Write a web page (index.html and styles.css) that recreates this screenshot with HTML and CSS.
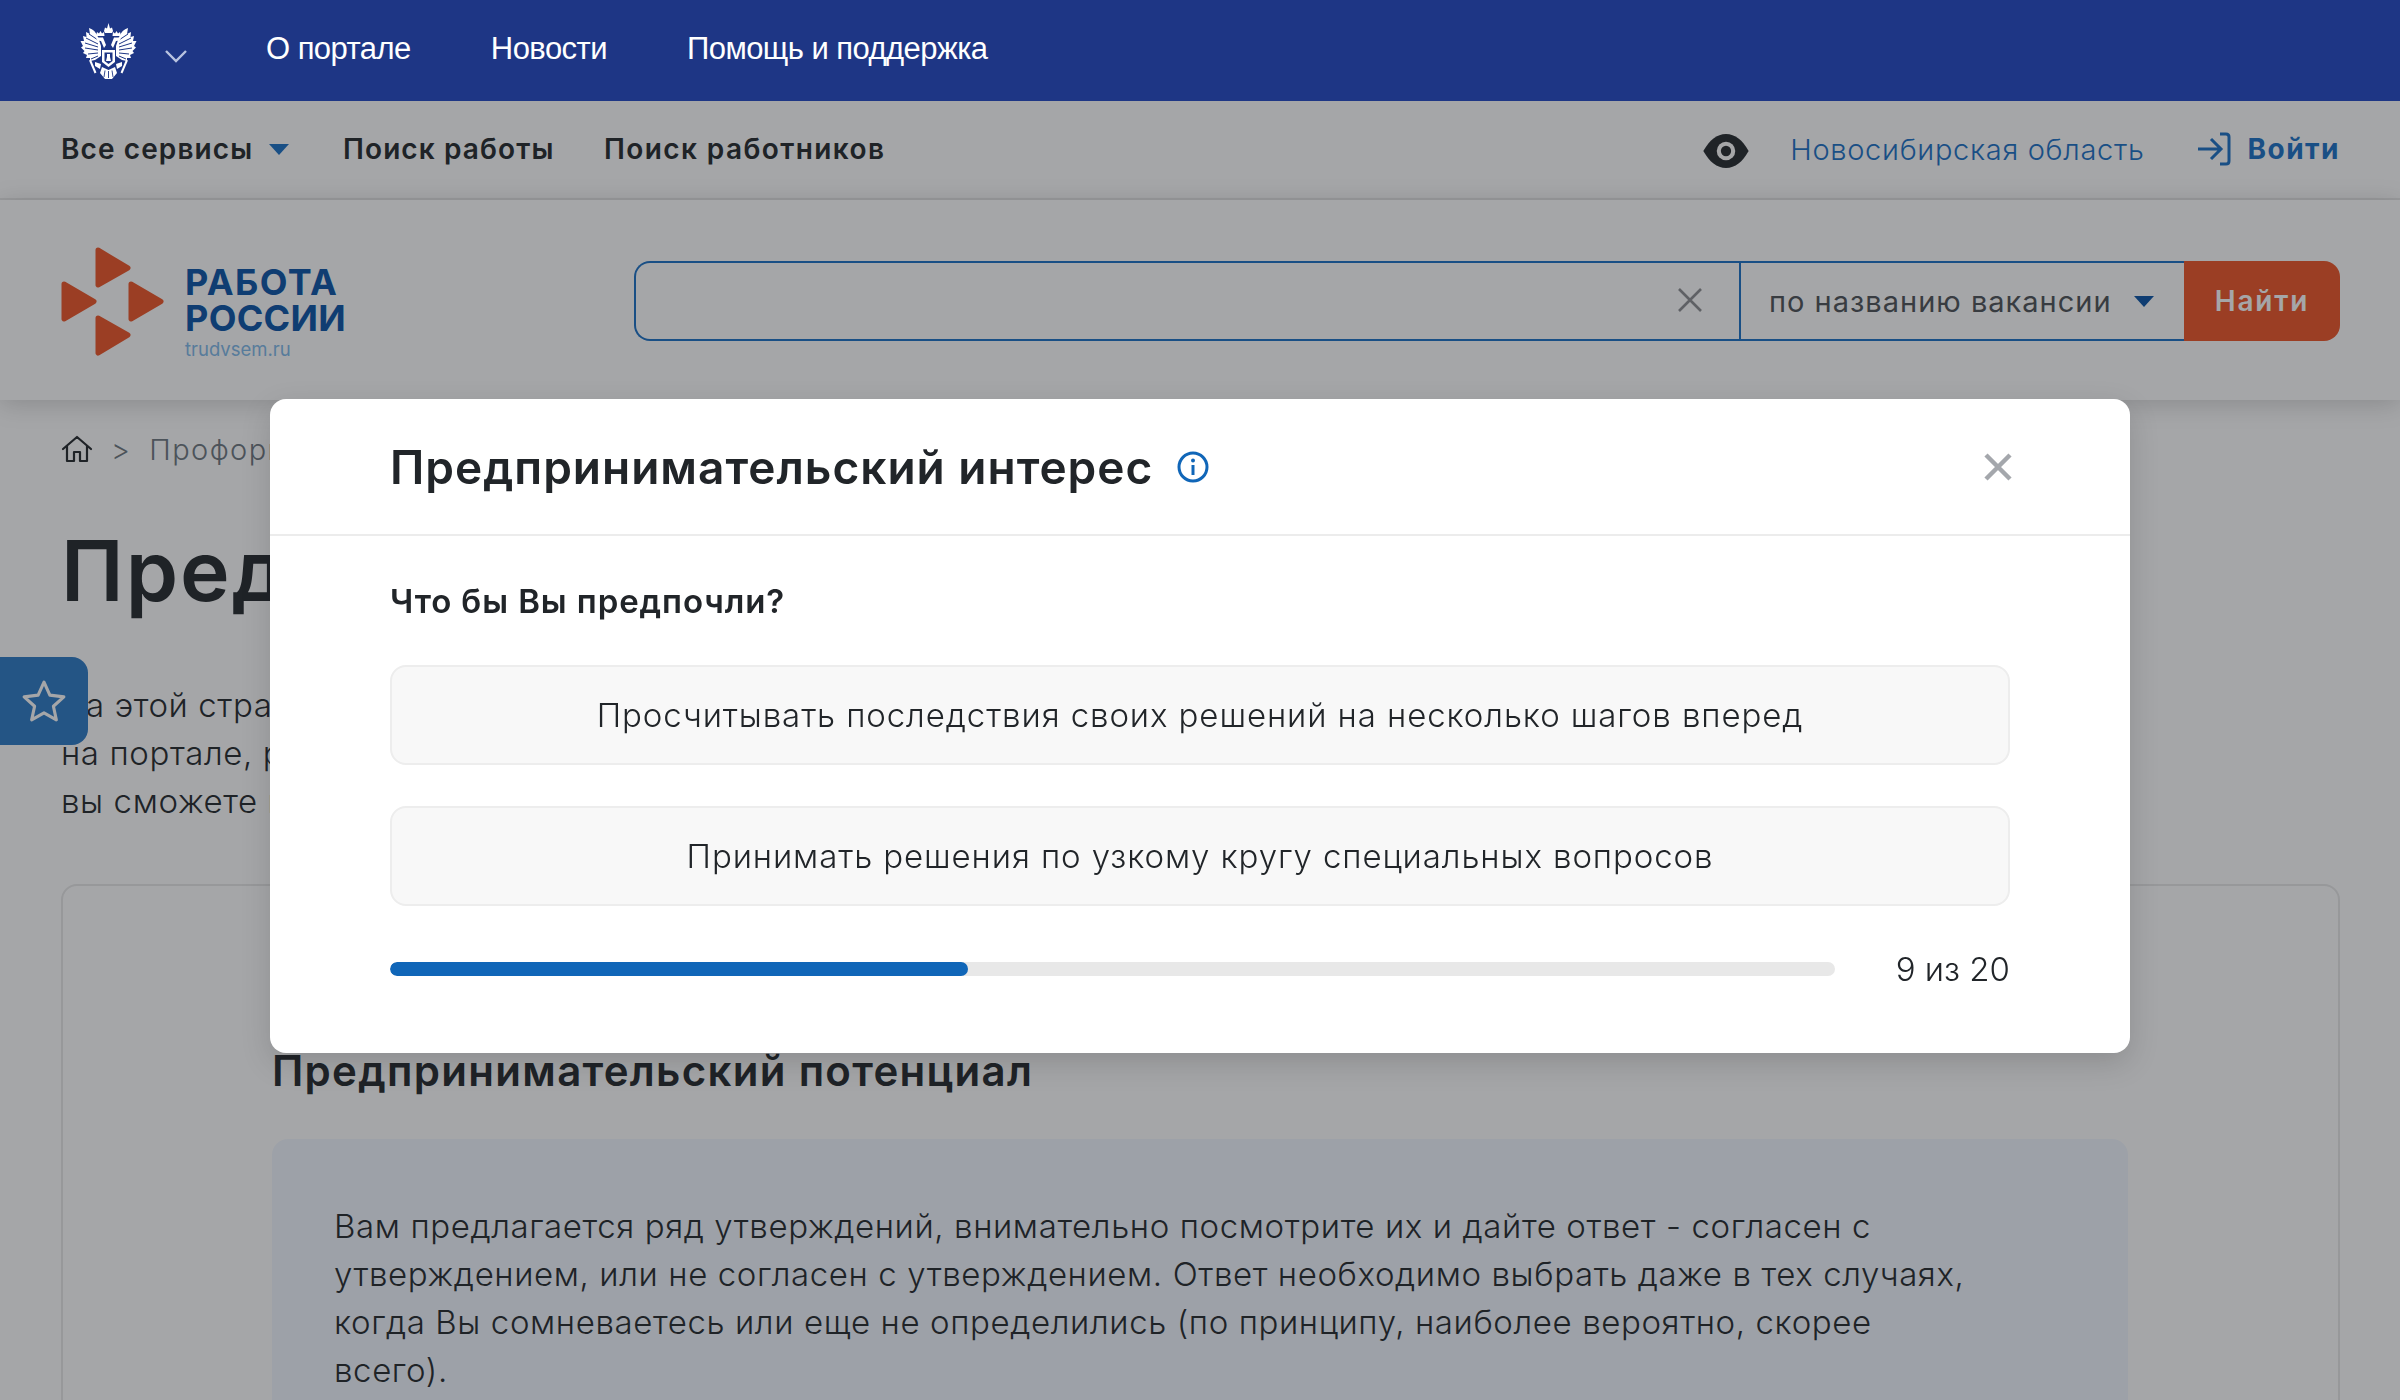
FILE: index.html
```html
<!DOCTYPE html>
<html lang="ru">
<head>
<meta charset="utf-8">
<title>Работа России</title>
<link rel="stylesheet" href="styles.css">
</head>
<body>
<div class="topbar">
  <svg class="emblem" viewBox="0 0 57 56" width="57" height="56">
    <defs>
      <g id="halfeagle">
        <path d="M21 23 L18 14 C16 9 13 6 9 5 L10 11 L6 9 L6.5 14 L3 13 L4 18 L0.5 18 L3 23 L1 24.5 L4.5 28 L3 30 L7 32 L6 35 L10 35 L10 38 L15 37 L21 33 Z" fill="#fff"/>
        <path d="M18 17 L9 11 M18 21 L6 15 M18 24 L5 20 M18 27 L5 25 M18 30 L8 31 M18 33 L11 36" stroke="#1e3685" stroke-width="1" fill="none"/>
        <path d="M16 13 L17 9 L19 10.5 L20.5 8 L22 10.5 L24 9 L24.5 13 Z" fill="#fff"/>
        <path d="M16 14.5 H23 L26 22 L24 25 L21 18 L17 17.5 Z" fill="#fff"/>
        <path d="M10 37 L15.5 50" stroke="#fff" stroke-width="2"/>
        <path d="M15 39 L21 41 L20 46 L15 43 Z" fill="#fff"/>
      </g>
    </defs>
    <use href="#halfeagle"/>
    <use href="#halfeagle" transform="matrix(-1 0 0 1 57 0)"/>
    <path d="M24 8 L25 4.5 L27 5.5 L28.5 0 L30 5.5 L32 4.5 L33 8 L32 10 H25 Z" fill="#fff"/>
    <path d="M22 27 H35 V39 L28.5 44 L22 39 Z" fill="#fff"/>
    <path d="M24.5 29.5 H32.5 V38 L28.5 41 L24.5 38 Z" fill="#1e3685"/>
    <path d="M27 31 H30 V34 L31 38 H26 L27 34 Z" fill="#fff"/>
    <path d="M22 44 L28.5 47 L35 44 L37 50 L32 56 H25 L20 50 Z" fill="#fff"/>
    <path d="M28.5 48 V55 M25 47.5 L24 54 M32 47.5 L33 54" stroke="#1e3685" stroke-width=".9"/>
  </svg>
  <svg class="chevron" viewBox="0 0 22 13" width="22" height="13"><path d="M1 1 L11 11 L21 1" fill="none" stroke="#b9c4e0" stroke-width="2.4"/></svg>
  <nav class="topnav">
    <a class="topnav-link">О портале</a>
    <a class="topnav-link">Новости</a>
    <a class="topnav-link">Помощь и поддержка</a>
  </nav>
</div>

<div class="subnav">
  <div class="subnav-left">
    <a class="subnav-link subnav-services">Все сервисы <span class="caret"></span></a>
    <a class="subnav-link subnav-work">Поиск работы</a>
    <a class="subnav-link subnav-workers">Поиск работников</a>
  </div>
  <div class="subnav-right">
    <svg class="eye" viewBox="0 0 44 33" width="46" height="34">
      <path d="M0 16.5 C6 6 13 0 22 0 C31 0 38 6 44 16.5 C38 27 31 33 22 33 C13 33 6 27 0 16.5 Z" fill="#212529"/>
      <circle cx="22" cy="16.5" r="9" fill="#fff"/>
      <circle cx="22" cy="16.5" r="5" fill="#212529"/>
    </svg>
    <a class="region">Новосибирская область</a>
    <a class="login">
      <svg viewBox="0 0 34 34" width="34" height="34">
        <path d="M23 2 H29 Q32 2 32 5 V29 Q32 32 29 32 H23" fill="none" stroke="#176ec5" stroke-width="3"/>
        <path d="M1 17 H23 M14 7 L24 17 L14 27" fill="none" stroke="#176ec5" stroke-width="3"/>
      </svg>
      <span class="login-text">Войти</span>
    </a>
  </div>
</div>

<header class="brandbar">
  <div class="logo">
    <svg class="logo-mark" viewBox="0 0 103 109" width="103" height="109">
      <g fill="#ee5324" stroke="#ee5324" stroke-width="5" stroke-linejoin="round">
        <path d="M37 3 L67 21 L37 38 Z"/>
        <path d="M3 37 L33 54.500 L3 72 Z"/>
        <path d="M70 37 L100 54.500 L70 72 Z"/>
        <path d="M37 71 L67 88 L37 106 Z"/>
      </g>
    </svg>
    <div class="logo-text">
      <div class="logo-line">РАБОТА</div>
      <div class="logo-line logo-line-second">РОССИИ</div>
      <div class="logo-url">trudvsem.ru</div>
    </div>
  </div>
  <form class="search">
    <div class="search-input">
      <svg viewBox="0 0 26 26" width="26" height="26"><path d="M2 2 L24 24 M24 2 L2 24" stroke="#8a8c8f" stroke-width="2.6" fill="none"/></svg>
    </div>
    <div class="search-select">
      <span>по названию вакансии</span>
      <span class="caret caret-select"></span>
    </div>
    <div class="search-button">Найти</div>
  </form>
</header>

<main class="page">
  <div class="crumbs">
    <svg viewBox="0 0 32 28" width="32" height="28"><path d="M2 14 L16 2 L30 14 M6 11 V26 H13 V17 H19 V26 H26 V11" fill="none" stroke="#212529" stroke-width="2.2" stroke-linejoin="round" stroke-linecap="round"/></svg>
    <span class="crumb-sep">&gt;</span>
    <span class="crumb">Профориентация</span>
  </div>
  <h1 class="page-title">Предпринимательский потенциал</h1>
  <p class="intro">На этой странице вы можете пройти тест<br>на портале, результаты которого помогут,<br>вы сможете получить рекомендации</p>
  <section class="card">
    <h2 class="card-title">Предпринимательский потенциал</h2>
    <div class="note">Вам предлагается ряд утверждений, внимательно посмотрите их и дайте ответ - согласен с утверждением, или не согласен с утверждением. Ответ необходимо выбрать даже в тех случаях, когда Вы сомневаетесь или еще не определились (по принципу, наиболее вероятно, скорее всего).</div>
  </section>
</main>

<a class="favtab">
  <svg viewBox="0 0 44 42" width="46" height="44"><path d="M22 3 L27.6 15.4 L41 17 L31 26 L33.8 39 L22 32.4 L10.2 39 L13 26 L3 17 L16.4 15.4 Z" fill="none" stroke="#fff" stroke-width="3" stroke-linejoin="round"/></svg>
</a>

<div class="backdrop">
  <div class="modal">
    <div class="modal-head">
      <h3 class="modal-title">Предпринимательский интерес</h3>
      <svg class="info" viewBox="0 0 32 32" width="32" height="32">
        <circle cx="16" cy="16" r="14" fill="none" stroke="#1066b8" stroke-width="3"/>
        <path d="M16 14 V24" stroke="#1066b8" stroke-width="3"/>
        <circle cx="16" cy="9.5" r="2" fill="#1066b8"/>
      </svg>
      <svg class="close" viewBox="0 0 28 28" width="28" height="28"><path d="M2 2 L26 26 M26 2 L2 26" stroke="#a4a7ac" stroke-width="4.5" fill="none"/></svg>
    </div>
    <div class="modal-body">
      <div class="question">Что бы Вы предпочли?</div>
      <div class="options">
        <button class="option" type="button">Просчитывать последствия своих решений на несколько шагов вперед</button>
        <button class="option" type="button">Принимать решения по узкому кругу специальных вопросов</button>
      </div>
      <div class="progress-row">
        <div class="progress"><div class="progress-fill" style="width:40%"></div></div>
        <div class="progress-label">9 из 20</div>
      </div>
    </div>
  </div>
</div>
</body>
</html>
```

FILE: styles.css
```css
* { box-sizing: border-box; }
html, body { margin: 0; height: 1400px; overflow: hidden; }
body {
  background: #fff;
  color: #212529;
  font-family: Inter, "Noto Sans", sans-serif;
  font-size: 33px;
  font-weight: 300;
  letter-spacing: .6px;
}
a { color: inherit; text-decoration: none; }

.topbar {
  position: relative;
  z-index: 20;
  height: 101px;
  background: #1e3685;
  display: flex;
  align-items: center;
  padding-left: 80px;
}
.emblem { display: block; }
.chevron { margin: 12px 0 0 28px; }
.topnav {
  display: flex;
  gap: 80px;
  margin: 0 0 3px 79px;
  font-family: "Liberation Sans", Arial, sans-serif;
  font-size: 31px;
  font-weight: 400;
  letter-spacing: -.55px;
  color: #fff;
}

.subnav {
  height: 99px;
  display: flex;
  justify-content: space-between;
  align-items: center;
  padding: 0 60px 1px 61px;
  border-bottom: 2px solid #ebebeb;
}
.subnav-left { display: flex; align-items: center; }
.subnav-link { font-size: 28px; font-weight: 600; letter-spacing: 1.1px; }
.subnav-services { display: flex; align-items: center; gap: 16px; width: 282px; }
.subnav-work { width: 261px; }
.subnav-workers { letter-spacing: 1.4px; }
.caret {
  display: inline-block;
  width: 0;
  height: 0;
  border-left: 10px solid transparent;
  border-right: 10px solid transparent;
  border-top: 11px solid #176ec5;
}
.subnav-right { display: flex; align-items: center; }
.eye { margin: 3px 41px 0 0; }
.region { color: #176ec5; font-size: 29px; letter-spacing: .7px; margin: 1px 53px 0 0; }
.login { display: flex; align-items: center; gap: 16px; color: #176ec5; font-weight: 700; font-size: 28px; letter-spacing: 1.5px; }

.brandbar {
  position: relative;
  height: 200px;
  display: flex;
  align-items: center;
  padding: 2px 60px 0 61px;
  box-shadow: 0 4px 24px rgba(0, 0, 0, .18);
}
.logo { display: flex; align-items: center; width: 573px; }
.logo-mark { display: block; }
.logo-text { margin: 24px 0 0 21px; }
.logo-line { font-weight: 700; font-size: 36px; line-height: 36px; letter-spacing: 1.4px; color: #0550a5; }
.logo-line-second { letter-spacing: .3px; }
.logo-url { font-size: 18.500px; line-height: 26px; font-weight: 400; letter-spacing: 0; color: #7db8ea; }
.search {
  flex: 1;
  height: 80px;
  display: flex;
}
.search-input {
  flex: 1;
  border: 2px solid #176ec5;
  border-right-width: 0;
  border-radius: 16px 0 0 16px;
  display: flex;
  align-items: center;
  justify-content: flex-end;
  padding: 0 36px 2px 0;
}
.search-select {
  width: 445px;
  border: 2px solid #176ec5;
  border-right-width: 0;
  display: flex;
  align-items: center;
  gap: 22px;
  padding-left: 28px;
  font-size: 29px;
  font-weight: 400;
  letter-spacing: 1px;
  color: #4a4f54;
}
.caret-select { border-top-color: #0550a5; }
.search-button {
  width: 156px;
  background: #ee5324;
  color: #fff;
  border-radius: 0 16px 16px 0;
  display: flex;
  align-items: center;
  justify-content: center;
  font-size: 28px;
  font-weight: 600;
  letter-spacing: 1.8px;
}

.page { height: 1000px; overflow: hidden; padding: 34px 60px 0 61px; }
.crumbs { display: flex; align-items: center; height: 30px; gap: 18px; color: #6c757d; font-size: 29px; letter-spacing: 1.4px; white-space: nowrap; }
.page-title {
  margin: 57px 0 0;
  font-size: 84px;
  line-height: 100px;
  font-weight: 600;
  letter-spacing: 2px;
  white-space: nowrap;
}
.intro {
  margin: 60px 0 0;
  line-height: 48px;
  white-space: nowrap;
}
.card {
  margin-top: 59px;
  height: 600px;
  border: 2px solid #e8e8e8;
  border-radius: 16px;
  padding: 159px 210px 0 209px;
}
.card-title { margin: 0; font-size: 42px; line-height: 52px; font-weight: 600; letter-spacing: 1.3px; white-space: nowrap; }
.note {
  margin-top: 42px;
  background: #f2f7ff;
  border-radius: 16px;
  padding: 63px 155px 63px 62px;
  line-height: 48px;
}

.favtab {
  position: fixed;
  left: 0;
  top: 657px;
  width: 88px;
  height: 88px;
  background: #2878c5;
  border-radius: 0 16px 16px 0;
  display: flex;
  align-items: center;
  justify-content: center;
}

.backdrop {
  position: fixed;
  inset: 101px 0 0;
  z-index: 10;
  background: rgba(30, 32, 37, .4);
  display: flex;
  justify-content: center;
  align-items: flex-start;
  padding-top: 298px;
}
.modal {
  width: 1860px;
  height: 654px;
  background: #fff;
  border-radius: 16px;
  box-shadow: 0 10px 30px rgba(0, 0, 0, .15);
}
.modal-head {
  height: 137px;
  display: flex;
  align-items: center;
  padding: 0 118px 0 120px;
  border-bottom: 2px solid #ececec;
}
.modal-title { margin: 0; font-size: 46px; font-weight: 600; letter-spacing: 1px; }
.info { margin-left: 24px; }
.close { margin-left: auto; }
.modal-body { padding: 43px 120px 0; }
.question { font-size: 33px; font-weight: 600; line-height: 44px; letter-spacing: .9px; }
.options { display: flex; flex-direction: column; gap: 41px; margin-top: 42px; }
.option {
  height: 100px;
  background: #f8f8f8;
  border: 2px solid #ededed;
  border-radius: 16px;
  color: #212529;
  font: inherit;
  letter-spacing: .9px;
  padding: 0;
}
.progress-row { display: flex; align-items: center; margin-top: 41px; }
.progress { width: 1445px; height: 14px; background: #e8e8e8; border-radius: 7px; overflow: hidden; }
.progress-fill { height: 100%; background: #1066b8; border-radius: 7px; }
.progress-label { margin-left: auto; line-height: 44px; letter-spacing: 0; }
```
